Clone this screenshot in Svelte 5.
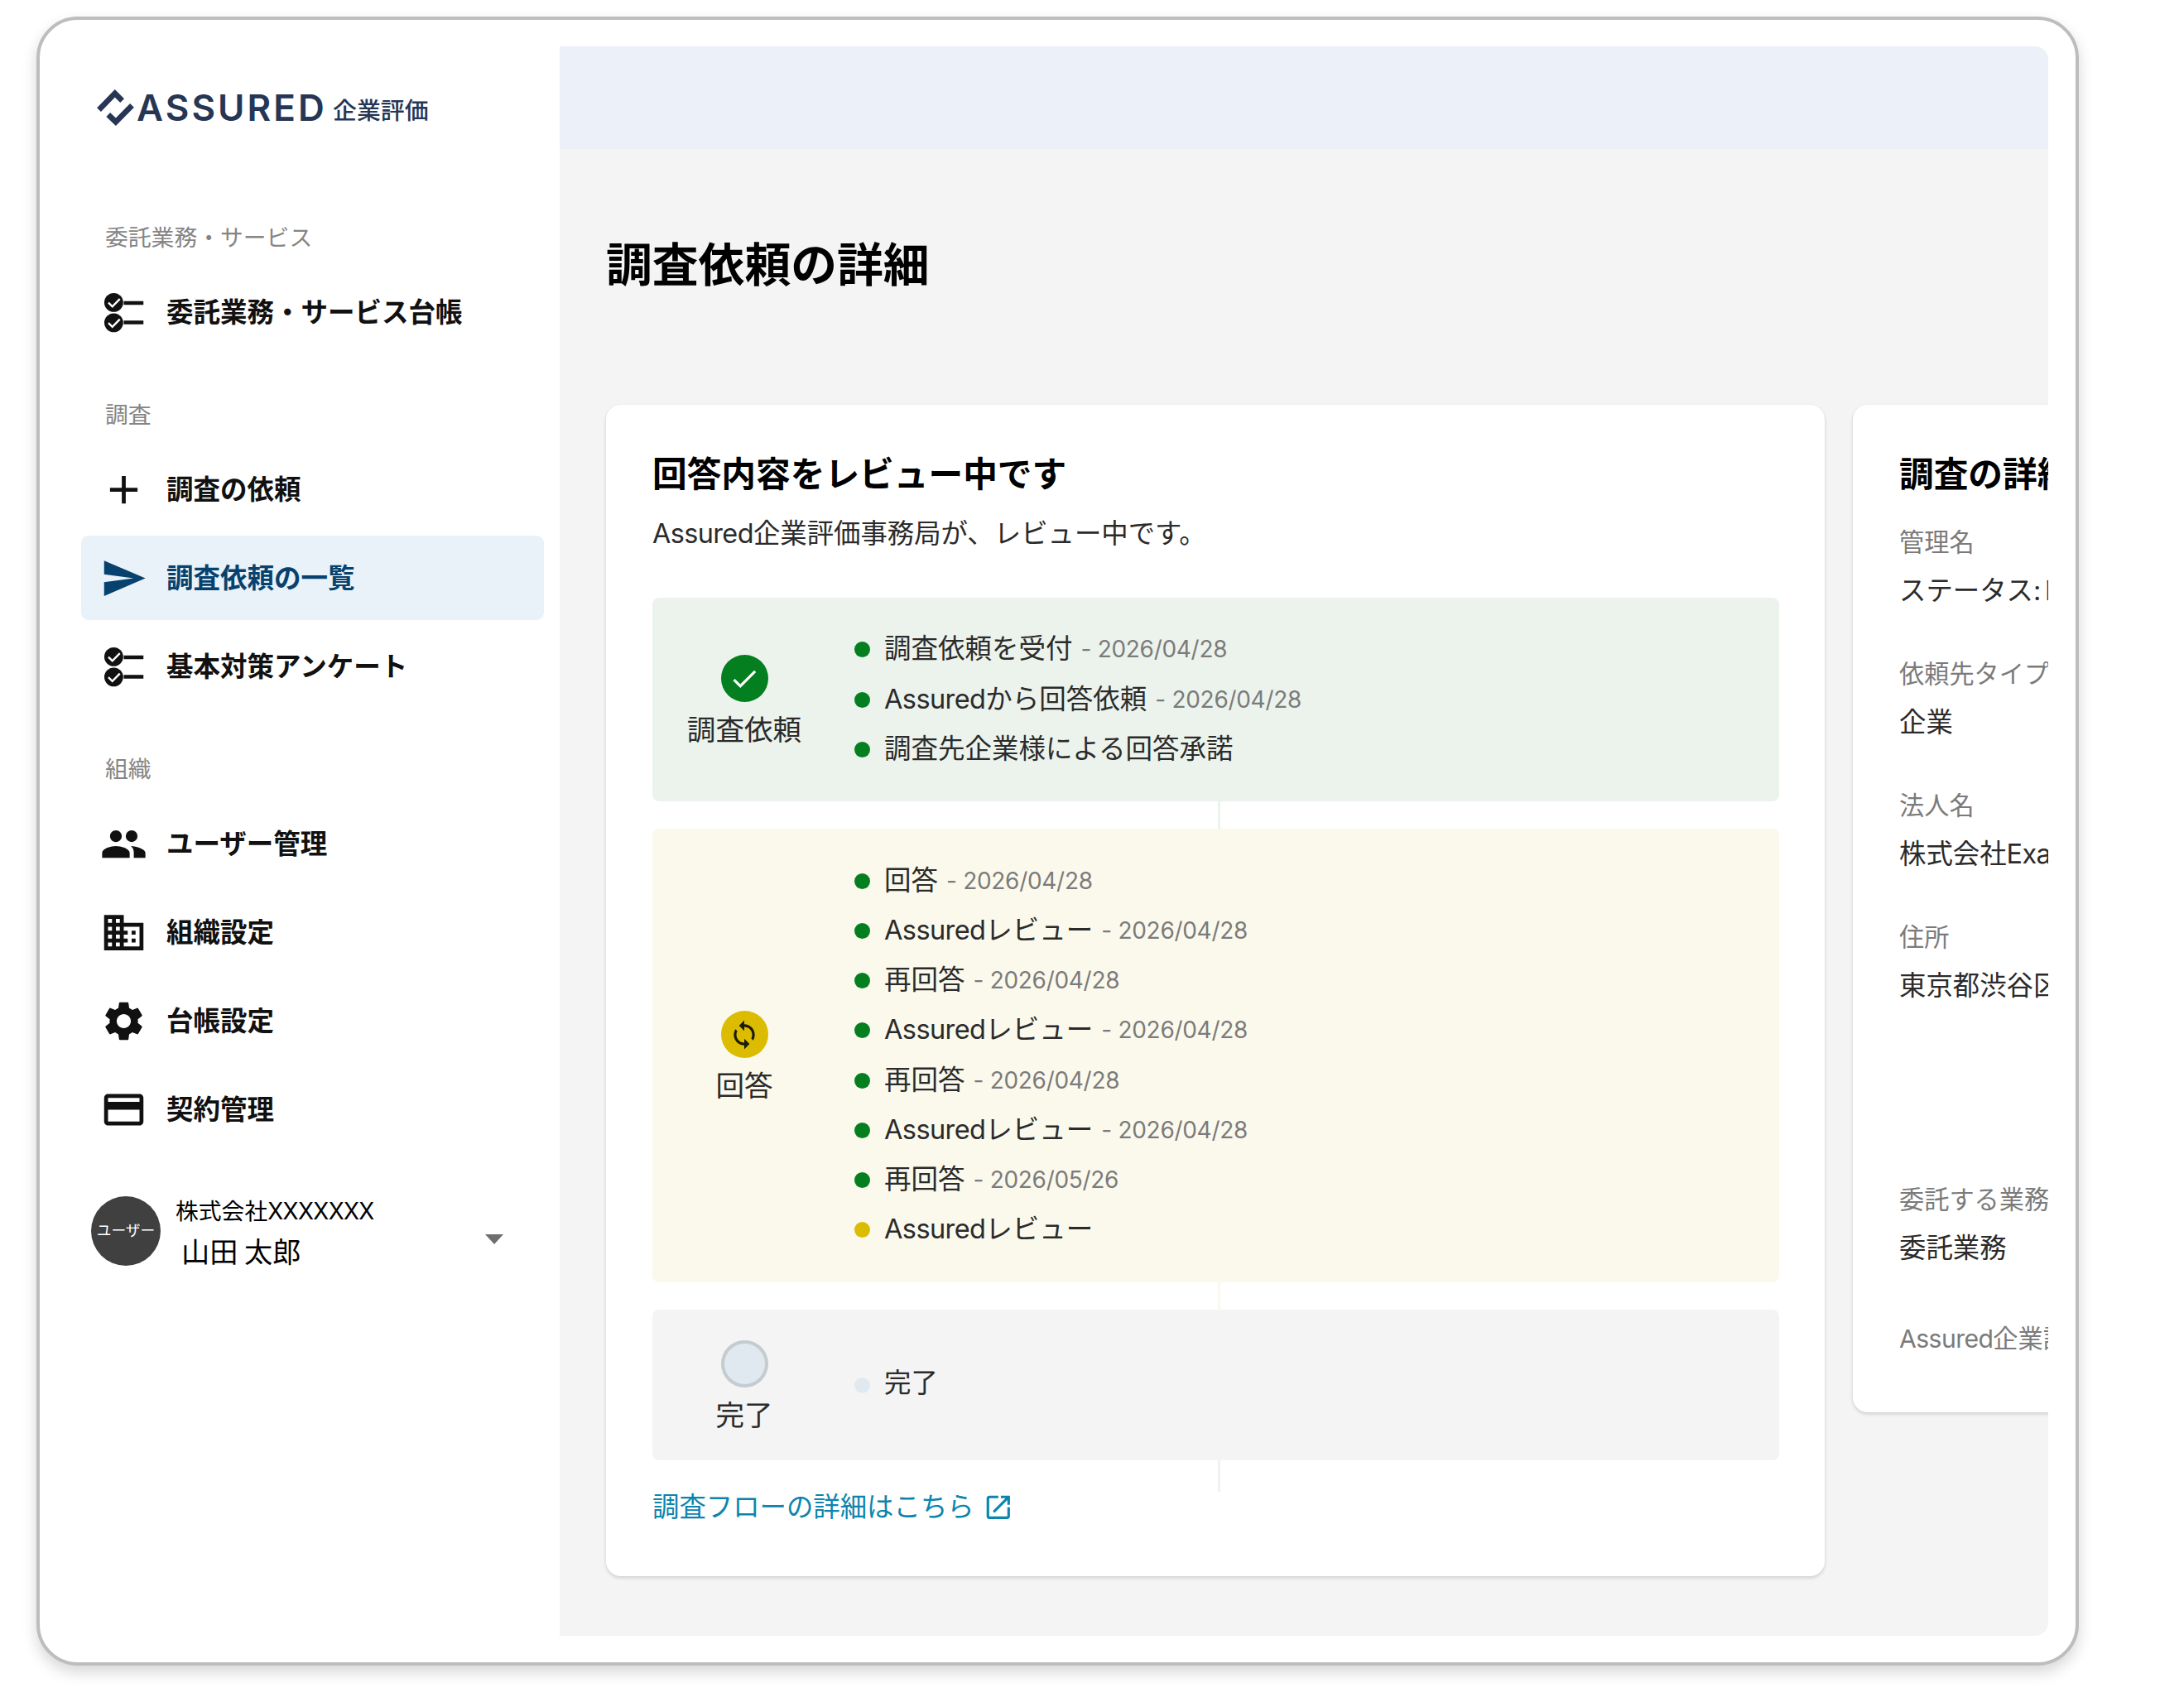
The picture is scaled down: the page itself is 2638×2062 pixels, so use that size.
<script>
  const navSections = [
    {
      label: '委託業務・サービス',
      items: [{ icon: 'checklist', text: '委託業務・サービス台帳' }]
    },
    {
      label: '調査',
      items: [
        { icon: 'add', text: '調査の依頼' },
        { icon: 'send', text: '調査依頼の一覧', active: true },
        { icon: 'checklist', text: '基本対策アンケート' }
      ]
    },
    {
      label: '組織',
      items: [
        { icon: 'people', text: 'ユーザー管理' },
        { icon: 'business', text: '組織設定' },
        { icon: 'settings', text: '台帳設定' },
        { icon: 'card', text: '契約管理' }
      ]
    }
  ];

  const iconPaths = {
    add: 'M19 13h-6v6h-2v-6H5v-2h6V5h2v6h6v2z',
    send: 'M2.01 21L23 12 2.01 3 2 10l15 2-15 2z',
    people:
      'M8 11c1.66 0 2.99-1.34 2.99-3S9.66 5 8 5C6.34 5 5 6.34 5 8s1.34 3 3 3zM16 5a3 3 0 100 6 3 3 0 000-6zM8 13c-2.33 0-7 1.17-7 3.5V19h14v-2.5c0-2.33-4.67-3.5-7-3.5zm7.6.02c1.1.84 1.5 2 1.5 3.48V19H23v-2.5c0-2.02-4.5-3.28-7.4-3.48z',
    business:
      'M12 7V3H2v18h20V7H12zM6 19H4v-2h2v2zm0-4H4v-2h2v2zm0-4H4V9h2v2zm0-4H4V5h2v2zm4 12H8v-2h2v2zm0-4H8v-2h2v2zm0-4H8V9h2v2zm0-4H8V5h2v2zm10 12h-8v-2h2v-2h-2v-2h2v-2h-2V9h8v10zm-2-8h-2v2h2v-2zm0 4h-2v2h2v-2z',
    settings:
      'M19.14 12.94c.04-.3.06-.61.06-.94 0-.32-.02-.64-.07-.94l2.03-1.58c.18-.14.23-.41.12-.61l-1.92-3.32c-.12-.22-.37-.29-.59-.22l-2.39.96c-.5-.38-1.03-.7-1.62-.94l-.36-2.54c-.04-.24-.24-.41-.48-.41h-3.84c-.24 0-.43.17-.47.41l-.36 2.54c-.59.24-1.13.57-1.62.94l-2.39-.96c-.22-.08-.47 0-.59.22L2.74 8.87c-.12.21-.08.47.12.61l2.03 1.58c-.05.3-.09.63-.09.94s.02.64.07.94l-2.03 1.58c-.18.14-.23.41-.12.61l1.92 3.32c.12.22.37.29.59.22l2.39-.96c.5.38 1.03.7 1.62.94l.36 2.54c.05.24.24.41.48.41h3.84c.24 0 .44-.17.47-.41l.36-2.54c.59-.24 1.13-.56 1.62-.94l2.39.96c.22.08.47 0 .59-.22l1.92-3.32c.12-.22.07-.47-.12-.61l-2.01-1.58zM12 15.6c-1.98 0-3.6-1.62-3.6-3.6s1.62-3.6 3.6-3.6 3.6 1.62 3.6 3.6-1.62 3.6-3.6 3.6z',
    card: 'M20 4H4c-1.11 0-1.99.89-1.99 2L2 18c0 1.11.89 2 2 2h16c1.11 0 2-.89 2-2V6c0-1.11-.89-2-2-2zm0 14H4v-6h16v6zm0-10H4V6h16v2z'
  };

  const stages = [
    {
      status: 'done',
      name: '調査依頼',
      steps: [
        { text: '調査依頼を受付', date: '2026/04/28', state: 'done' },
        { text: 'Assuredから回答依頼', date: '2026/04/28', state: 'done' },
        { text: '調査先企業様による回答承諾', state: 'done' }
      ]
    },
    {
      status: 'doing',
      name: '回答',
      steps: [
        { text: '回答', date: '2026/04/28', state: 'done' },
        { text: 'Assuredレビュー', date: '2026/04/28', state: 'done' },
        { text: '再回答', date: '2026/04/28', state: 'done' },
        { text: 'Assuredレビュー', date: '2026/04/28', state: 'done' },
        { text: '再回答', date: '2026/04/28', state: 'done' },
        { text: 'Assuredレビュー', date: '2026/04/28', state: 'done' },
        { text: '再回答', date: '2026/05/26', state: 'done' },
        { text: 'Assuredレビュー', state: 'doing' }
      ]
    },
    {
      status: 'todo',
      name: '完了',
      steps: [{ text: '完了', state: 'todo' }]
    }
  ];

  const details = [
    { label: '管理名', value: 'ステータス:レビュー中' },
    { label: '依頼先タイプ', value: '企業' },
    { label: '法人名', value: '株式会社Example' },
    { label: '住所', value: '東京都渋谷区', tall: true },
    { label: '委託する業務', value: '委託業務' },
    { label: 'Assured企業評価' }
  ];
</script>

<!-- latin runs are set a little tighter than the Japanese around them -->
{#snippet mixed(text)}
  {#each text.split(/([A-Za-z]+)/).filter(Boolean) as part}<span class:latin={/^[A-Za-z]/.test(part)}>{part}</span>{/each}
{/snippet}

<div class="window">
  <aside class="sidebar">
    <div class="logo">
      <svg class="logo-mark" viewBox="0 0 132 136" fill="none" stroke="currentColor" stroke-width="20">
        <path d="M7 76L64 17l26 26" />
        <path d="M125 60L67 119 40 93" />
      </svg>
      <span class="logo-name">ASSURED</span>
      <span class="logo-sub">企業評価</span>
    </div>

    <nav>
      {#each navSections as section}
        <section class="nav-section">
          <h3 class="nav-label">{section.label}</h3>
          <ul>
            {#each section.items as item}
              <li class="nav-item" class:active={item.active}>
                <svg class="nav-icon" viewBox="0 0 24 24" fill="currentColor">
                  {#if item.icon === 'checklist'}
                    <circle cx="6.9" cy="6.9" r="4.8" />
                    <circle cx="6.9" cy="17.2" r="4.8" />
                    <path d="M12 6.2h10v1.9H12zM12 16.1h10v1.9H12z" />
                    <path
                      d="M4.2 7l2 2L10 5.1M4.2 17.3l2 2 3.8-3.9"
                      fill="none"
                      stroke="#fff"
                      stroke-width="1"
                    />
                  {:else}
                    <path d={iconPaths[item.icon]} />
                  {/if}
                </svg>
                <span class="nav-text">{item.text}</span>
              </li>
            {/each}
          </ul>
        </section>
      {/each}
    </nav>

    <div class="user">
      <div class="avatar">ユーザー</div>
      <div class="user-info">
        <span class="company">{@render mixed('株式会社XXXXXXX')}</span>
        <span class="name">山田 太郎</span>
      </div>
      <svg class="caret" viewBox="0 0 22 12"><path d="M0 0h22L11 12z" fill="#6f6f6f" /></svg>
    </div>
  </aside>

  <main class="page">
    <header class="topbar"></header>
    <h1>調査依頼の詳細</h1>

    <div class="cards">
      <section class="card progress">
        <h2>回答内容をレビュー中です</h2>
        <p class="lead">{@render mixed('Assured企業評価事務局が、レビュー中です。')}</p>

        {#each stages as stage}
          <div class="stage {stage.status}">
            <div class="stage-head">
              <span class="badge">
                {#if stage.status === 'done'}
                  <svg viewBox="0 0 24 24" fill="#fff">
                    <path d="M9 16.17L4.83 12l-1.42 1.41L9 19 21 7l-1.41-1.41z" />
                  </svg>
                {:else if stage.status === 'doing'}
                  <svg viewBox="0 0 24 24" fill="#1c1a08">
                    <path
                      d="M12 4V1L8 5l4 4V6c3.31 0 6 2.69 6 6 0 1.01-.25 1.97-.7 2.8l1.46 1.46C19.54 15.03 20 13.57 20 12c0-4.42-3.58-8-8-8zm0 14c-3.31 0-6-2.69-6-6 0-1.01.25-1.97.7-2.8L5.24 7.74C4.46 8.97 4 10.43 4 12c0 4.42 3.58 8 8 8v3l4-4-4-4v3z"
                    />
                  </svg>
                {/if}
              </span>
              <span class="stage-name">{stage.name}</span>
            </div>
            <ul class="steps">
              {#each stage.steps as step}
                <li class={step.state}>
                  <span>{@render mixed(step.text)}</span>
                  {#if step.date}<span class="date">- {step.date}</span>{/if}
                </li>
              {/each}
            </ul>
          </div>
          <div class="connector {stage.status}"></div>
        {/each}

        <a class="flow-link" href="#flow">
          調査フローの詳細はこちら
          <svg viewBox="0 0 24 24" fill="currentColor">
            <path
              d="M19 19H5V5h7V3H5c-1.11 0-2 .9-2 2v14c0 1.1.89 2 2 2h14c1.1 0 2-.9 2-2v-7h-2v7zM14 3v2h3.59l-9.83 9.83 1.41 1.41L19 6.41V10h2V3h-7z"
            />
          </svg>
        </a>
      </section>

      <section class="card detail">
        <h2>調査の詳細</h2>
        <dl>
          {#each details as row}
            <div class="row" class:tall={row.tall}>
              <dt>{@render mixed(row.label)}</dt>
              {#if row.value}<dd>{@render mixed(row.value)}</dd>{/if}
            </div>
          {/each}
        </dl>
      </section>
    </div>
  </main>
</div>

<style>
  :global(body) {
    display: flow-root;
    min-height: 100vh;
    background: #fff;
  }

  * {
    box-sizing: border-box;
  }

  h1,
  h2,
  h3,
  p,
  ul,
  dl,
  dt,
  dd {
    margin: 0;
    padding: 0;
    font-weight: 400;
  }

  ul {
    list-style: none;
  }

  .window {
    display: flex;
    width: 2467px;
    height: 1992px;
    margin: 20px 0 0 44px;
    padding: 32px 33px 32px 0;
    border: 4px solid #bdbdbd;
    border-radius: 50px;
    background: #fff;
    box-shadow: 0 8px 18px rgba(0, 0, 0, 0.16);
    font-family: Inter, 'Noto Sans CJK JP', sans-serif;
    font-size: 32.4px;
    color: #2b2b2b;
    white-space: nowrap;
  }

  .latin {
    letter-spacing: -0.6px;
  }

  /* sidebar */
  .sidebar {
    flex: none;
    width: 628px;
    padding: 48px 19px 0 50px;
  }

  .logo {
    display: flex;
    align-items: center;
    height: 52px;
    padding-left: 19px;
    color: #263654;
  }

  .logo-mark {
    width: 45px;
    height: 46px;
  }

  .logo-name {
    margin-left: 3px;
    font-size: 44px;
    font-weight: 600;
    line-height: 52px;
    letter-spacing: 3.1px;
  }

  .logo-sub {
    margin-left: 7px;
    padding-top: 1px;
    font-size: 28.9px;
    font-weight: 500;
  }

  nav {
    padding-top: 93px;
  }

  .nav-section {
    margin-bottom: 34px;
  }

  .nav-label {
    height: 77px;
    padding-left: 29px;
    font-size: 27.8px;
    line-height: 76px;
    color: #858585;
  }

  .nav-item {
    display: flex;
    align-items: center;
    height: 102px;
    margin-bottom: 5px;
    padding-left: 23px;
    border-radius: 9px;
    font-weight: 700;
    color: #111;
  }

  .nav-section + .nav-section .nav-label {
    height: 78px;
    line-height: 78px;
  }

  .nav-item:last-child {
    margin-bottom: 0;
  }

  .nav-item.active {
    background: #e9f1f9;
    color: #07426f;
  }

  .nav-icon {
    width: 57px;
    height: 57px;
    margin-right: 23px;
  }

  .nav-text {
    padding-bottom: 5px;
    font-size: 32.5px;
  }

  .user {
    display: flex;
    align-items: center;
    height: 84px;
    margin-top: 54px;
    padding-left: 12px;
    color: #000;
  }

  .avatar {
    width: 84px;
    height: 84px;
    border-radius: 50%;
    background: #404040;
    color: #fff;
    font-size: 17.7px;
    line-height: 84px;
    text-align: center;
  }

  .user-info {
    display: flex;
    flex-direction: column;
    width: 374px;
    margin-left: 18px;
  }

  .company {
    font-size: 27.8px;
    line-height: 46px;
  }

  .name {
    padding-left: 7px;
    font-family: 'Noto Sans CJK JP', sans-serif;
    font-size: 34.2px;
    line-height: 48px;
  }

  .caret {
    width: 22px;
    height: 12px;
    margin-top: 20px;
  }

  /* page */
  .page {
    flex: 1;
    min-width: 0;
    overflow: hidden;
    border-radius: 0 16px 16px 0;
    background: #f4f4f4;
  }

  .topbar {
    height: 124px;
    background: #ebf0f9;
  }

  h1 {
    height: 309px;
    padding: 98px 0 0 56px;
    font-size: 55.8px;
    font-weight: 700;
    line-height: 84px;
    color: #000;
  }

  .cards {
    display: flex;
    align-items: flex-start;
    gap: 34px;
    padding-left: 56px;
  }

  .card {
    flex: none;
    border-radius: 18px;
    background: #fff;
    box-shadow: 0 2px 4px rgba(0, 0, 0, 0.16);
  }

  .card h2 {
    font-size: 41.7px;
    font-weight: 700;
    line-height: 64px;
    color: #000;
  }

  .progress {
    width: 1472px;
    height: 1415px;
    padding: 52px 55px 0 56px;
  }

  .lead {
    margin: 16px 0 53px;
    line-height: 48px;
  }

  .stage {
    display: flex;
    align-items: center;
    border-radius: 8px;
  }

  .stage.done {
    height: 246px;
    background: #ecf3ec;
  }

  .stage.doing {
    height: 548px;
    background: #fbf9ec;
  }

  .stage.todo {
    height: 182px;
    background: #f4f4f4;
  }

  .stage-head {
    display: flex;
    flex-direction: column;
    align-items: center;
    gap: 15px;
    width: 222px;
    height: 108px;
    font-size: 34.6px;
    line-height: 36px;
  }

  .badge {
    display: grid;
    flex: none;
    place-items: center;
    width: 57px;
    height: 57px;
    border-radius: 50%;
  }

  .badge svg {
    width: 38px;
    height: 38px;
  }

  .done .badge {
    background: #047f20;
  }

  .doing .badge {
    background: #dcbc00;
  }

  .todo .badge {
    border: 4px solid #c5ccd0;
    background: #e1e9f0;
  }

  .steps {
    padding-left: 22px;
    font-size: 32.5px;
  }

  .steps li {
    display: flex;
    align-items: center;
    height: 60.2px;
    line-height: 60px;
  }

  .steps li::before {
    content: '';
    width: 19px;
    height: 19px;
    margin-right: 17px;
    border-radius: 50%;
    background: #047f20;
  }

  .steps li.doing::before {
    background: #dcbc00;
  }

  .steps li.todo::before {
    background: #e1e9f0;
  }

  .steps li > span {
    padding-bottom: 1px;
  }

  .steps li.todo > span {
    padding-bottom: 5px;
  }

  .date {
    margin-left: 10px;
    font-size: 28px;
    letter-spacing: -0.3px;
    color: #7b7b7b;
  }

  .connector {
    width: 3px;
    height: 33px;
    margin-left: 683px;
    background: #ecf3ec;
  }

  .connector.doing {
    background: #fbf9ec;
  }

  .connector.todo {
    height: 38px;
    background: #f0f0f0;
  }

  .flow-link {
    display: flex;
    align-items: center;
    gap: 10px;
    height: 38px;
    line-height: 34px;
    color: #0b85ae;
    text-decoration: none;
  }

  .flow-link svg {
    width: 37.6px;
    height: 37.6px;
  }

  .detail {
    width: 720px;
    height: 1217px;
    padding: 52px 56px 0;
  }

  .row {
    height: 159px;
    padding-top: 25px;
  }

  .row.tall {
    height: 317px;
  }

  .row:last-child {
    padding-top: 34px;
  }

  dt {
    font-size: 30.2px;
    line-height: 50px;
    color: #7b7b7b;
  }

  dd {
    margin-top: 9px;
    line-height: 50px;
  }
</style>
